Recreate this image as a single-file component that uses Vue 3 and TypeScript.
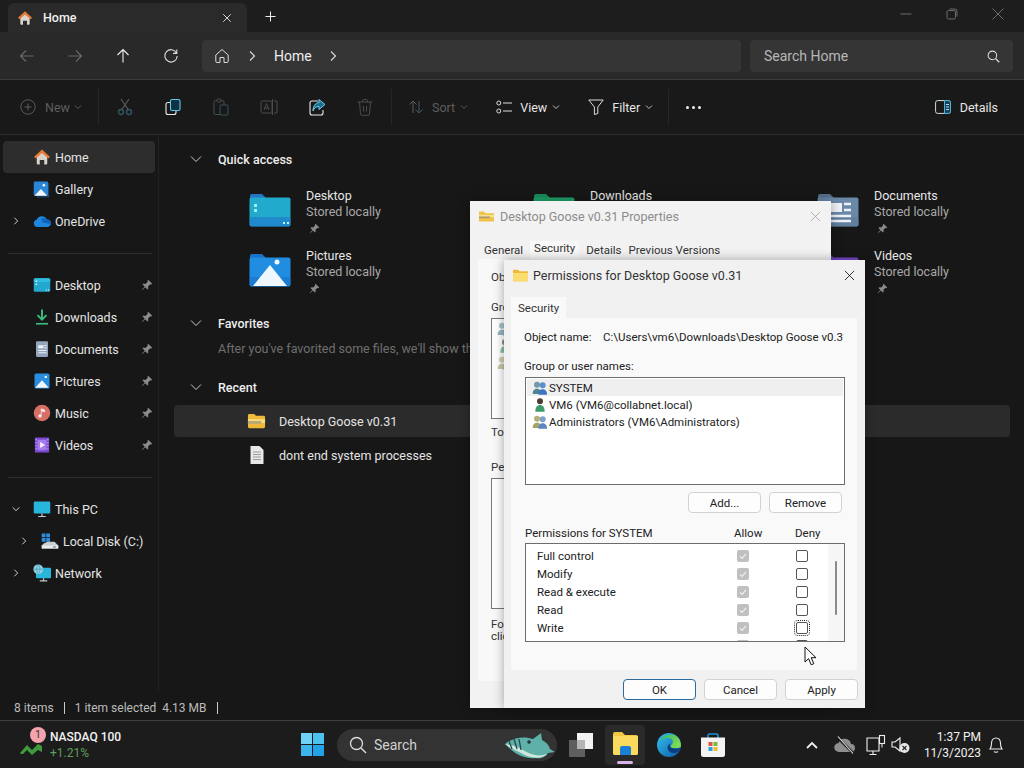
<template>
  <div class="screen">
    <!-- title bar -->
    <div class="titlebar">
      <div class="tab">
        <svg class="ic16" viewBox="0 0 24 24" v-html="icons.home"></svg>
        <span class="tab-label">Home</span>
        <svg class="tab-close" viewBox="0 0 12 12"><path d="M1.5 1.5l9 9M10.5 1.5l-9 9" stroke="#e8e8e8" stroke-width="1.1" /></svg>
      </div>
      <svg class="tab-add" viewBox="0 0 12 12"><path d="M6 .5v11M.5 6h11" stroke="#eee" stroke-width="1.1" /></svg>
      <div class="winctl">
        <div class="winbtn"><svg viewBox="0 0 12 12" width="12" height="12"><path d="M.5 6h11" stroke="#6c6c6c" /></svg></div>
        <div class="winbtn"><svg viewBox="0 0 12 12" width="12" height="12"><rect x="1" y="2.5" width="8.5" height="8.5" rx="1.5" fill="none" stroke="#6c6c6c" /><path d="M3.5 1h5.5a2 2 0 0 1 2 2v5.5" fill="none" stroke="#6c6c6c" /></svg></div>
        <div class="winbtn"><svg viewBox="0 0 12 12" width="12" height="12"><path d="M.5.5l11 11M11.5.5l-11 11" stroke="#6c6c6c" /></svg></div>
      </div>
    </div>

    <!-- navigation bar -->
    <div class="navbar">
      <div class="navbtn"><svg class="ic16" viewBox="0 0 16 16"><path d="M14.5 8h-13M7 2.5 1.5 8 7 13.5" fill="none" stroke="#6a6a6a" stroke-width="1.1" /></svg></div>
      <div class="navbtn"><svg class="ic16" viewBox="0 0 16 16"><path d="M1.5 8h13M9 2.5 14.5 8 9 13.5" fill="none" stroke="#6a6a6a" stroke-width="1.1" /></svg></div>
      <div class="navbtn"><svg class="ic16" viewBox="0 0 16 16"><path d="M8 14.5v-13M2.5 7 8 1.5 13.5 7" fill="none" stroke="#eee" stroke-width="1.1" /></svg></div>
      <div class="navbtn"><svg class="ic16" viewBox="0 0 16 16"><path d="M13.6 5.2A6.2 6.2 0 1 0 14.2 8M13.8 1.6v3.8H10" fill="none" stroke="#ddd" stroke-width="1.1" /></svg></div>
      <div class="address">
        <svg class="addr-home" viewBox="0 0 16 16"><path d="M1.8 7 8 1.5 14.2 7v6.2a1.3 1.3 0 0 1-1.3 1.3H10V9.5H6v5H3.1a1.3 1.3 0 0 1-1.3-1.3z" fill="none" stroke="#ddd" stroke-width="1" /></svg>
        <svg class="crumb c1" viewBox="0 0 8 12"><path d="M2 1.5 6.5 6 2 10.5" fill="none" stroke="#ddd" stroke-width="1.1" /></svg>
        <span class="addr-text">Home</span>
        <svg class="crumb c2" viewBox="0 0 8 12"><path d="M2 1.5 6.5 6 2 10.5" fill="none" stroke="#ddd" stroke-width="1.1" /></svg>
      </div>
      <div class="search">
        <span>Search Home</span>
        <svg class="search-ic" viewBox="0 0 14 14"><circle cx="5.8" cy="5.8" r="4.6" fill="none" stroke="#ddd" stroke-width="1.1" /><path d="M9.2 9.2l4 4" stroke="#ddd" stroke-width="1.3" /></svg>
      </div>
    </div>

    <!-- command bar -->
    <div class="cmdbar">
      <div class="cmd-new dim">
        <svg class="ic16" viewBox="0 0 16 16"><circle cx="8" cy="8" r="7.2" fill="none" stroke="#5c5c5c" /><path d="M8 4.5v7M4.5 8h7" stroke="#5c5c5c" /></svg>
        <span>New</span>
        <svg class="chev" viewBox="0 0 8 6"><path d="M1 1.5 4 4.5 7 1.5" fill="none" stroke="#5c5c5c" /></svg>
      </div>
      <div class="divider"></div>
      <div class="cmd-ic" v-for="c in cmdIcons" :key="c"><svg class="ic18" viewBox="0 0 18 18" v-html="icons[c]"></svg></div>
      <div class="divider d2"></div>
      <div class="cmd-text dim sort">
        <svg class="ic16" viewBox="0 0 16 16"><path d="M5 14V2M1.5 5.5 5 2l3.5 3.5" fill="none" stroke="#5c5c5c" /><path d="M11 2v12M7.5 10.5 11 14l3.5-3.5" fill="none" stroke="#3d5a63" /></svg>
        <span>Sort</span>
        <svg class="chev" viewBox="0 0 8 6"><path d="M1 1.5 4 4.5 7 1.5" fill="none" stroke="#5c5c5c" /></svg>
      </div>
      <div class="cmd-text view">
        <svg class="ic16" viewBox="0 0 16 16"><circle cx="2.8" cy="4" r="2" fill="none" stroke="#ddd" /><circle cx="2.8" cy="12" r="2" fill="none" stroke="#ddd" /><path d="M7 4h9M7 12h9" stroke="#ddd" /></svg>
        <span>View</span>
        <svg class="chev" viewBox="0 0 8 6"><path d="M1 1.5 4 4.5 7 1.5" fill="none" stroke="#bbb" /></svg>
      </div>
      <div class="cmd-text filter">
        <svg class="ic16" viewBox="0 0 16 16"><path d="M.8 1h14.4L9.8 8v6.5l-3.4 1V8z" fill="none" stroke="#ddd" /></svg>
        <span>Filter</span>
        <svg class="chev" viewBox="0 0 8 6"><path d="M1 1.5 4 4.5 7 1.5" fill="none" stroke="#bbb" /></svg>
      </div>
      <div class="divider d3"></div>
      <div class="more"><i></i><i></i><i></i></div>
      <div class="details">
        <svg class="ic16" viewBox="0 0 16 16"><rect x=".6" y="1.6" width="14.8" height="12.8" rx="2" fill="none" stroke="#cfdde2" /><path d="M9.5 1.6h4a2 2 0 0 1 2 2v8.8a2 2 0 0 1-2 2h-4z" fill="#17435a" stroke="#4fb3dc" /><path d="M11 5.5h3M11 8h3M11 10.5h3" stroke="#cfe9f5" stroke-width=".9" /></svg>
        <span>Details</span>
      </div>
    </div>

    <!-- body -->
    <div class="body">
      <aside class="sidebar">
        <template v-for="(group, gi) in sidebar" :key="gi">
          <div v-if="gi" class="side-sep"></div>
          <div
            v-for="item in group"
            :key="item.label"
            class="side-row"
            :class="{ active: item.active, indent: item.indent }"
          >
            <svg v-if="item.expander" class="side-chev" viewBox="0 0 12 12">
              <path :d="item.expander === 'open' ? 'M2 4l4 4 4-4' : 'M4 2l4 4-4 4'" fill="none" stroke="#ccc" stroke-width="1.2" />
            </svg>
            <span v-else class="side-chev"></span>
            <svg class="side-ic" viewBox="0 0 24 24" v-html="icons[item.icon]"></svg>
            <span class="side-label">{{ item.label }}</span>
            <svg v-if="item.pinned" class="side-pin" viewBox="0 0 12 12" v-html="icons.pin"></svg>
          </div>
        </template>
      </aside>

      <main class="content">
        <div class="sec-head">
          <svg class="sec-chev" viewBox="0 0 12 12"><path d="M1 3.5 6 8.5l5-5" fill="none" stroke="#ccc" /></svg>
          <span>Quick access</span>
        </div>
        <div class="qa-grid">
          <div class="qa-item" v-for="q in quick" :key="q.name">
            <svg class="qa-ic" viewBox="0 0 42 34" v-html="icons[q.icon]"></svg>
            <div class="qa-text">
              <div class="qa-name">{{ q.name }}</div>
              <div class="qa-sub">Stored locally</div>
              <svg class="qa-pin" viewBox="0 0 12 12" v-html="icons.pin"></svg>
            </div>
          </div>
        </div>

        <div class="sec-head fav">
          <svg class="sec-chev" viewBox="0 0 12 12"><path d="M1 3.5 6 8.5l5-5" fill="none" stroke="#ccc" /></svg>
          <span>Favorites</span>
        </div>
        <div class="fav-desc">After you've favorited some files, we'll show them here.</div>

        <div class="sec-head rec">
          <svg class="sec-chev" viewBox="0 0 12 12"><path d="M1 3.5 6 8.5l5-5" fill="none" stroke="#ccc" /></svg>
          <span>Recent</span>
        </div>
        <div class="rec-row sel">
          <svg class="rec-ic" viewBox="0 0 20 18"><path d="M1 3a1.5 1.5 0 0 1 1.5-1.5h5L9.500 3.500H17.500A1.500 1.500 0 0 1 19 5v10a1.500 1.500 0 0 1-1.500 1.500h-15A1.500 1.500 0 0 1 1 15z" fill="#f0b93a" /><path d="M1 7h18v4H1z" fill="#f9dc7c" /><path d="M1 9h14v3H1z" fill="#b9a878" /></svg>
          <span>Desktop Goose v0.31</span>
        </div>
        <div class="rec-row">
          <svg class="rec-ic doc" viewBox="0 0 16 20"><path d="M1.500 1h9l4 4v14h-13z" fill="#e8e8e8" /><path d="M4 7h8M4 9.500h8M4 12h8M4 14.500h8" stroke="#8a8a8a" stroke-width=".8" /></svg>
          <span>dont end system processes</span>
        </div>
      </main>
    </div>

    <div class="status">
      <span>8 items</span><i></i><span>1 item selected&nbsp; 4.13 MB</span><i></i>
    </div>

    <!-- taskbar -->
    <div class="taskbar">
      <div class="widget">
        <div class="w-ic">
          <svg width="24" height="16" viewBox="0 0 24 16"><path d="M0 14 7 6l5 5 6-6 4 2v6l-4-2-6 5-5-5-4 4H1z" fill="#3f9a3d" /></svg>
          <span class="badge">1</span>
        </div>
        <div class="w-text">
          <div class="w-name">NASDAQ 100</div>
          <div class="w-val">+1.21%</div>
        </div>
      </div>
      <svg class="tb-win" viewBox="0 0 23 23">
        <rect width="11" height="11" fill="#6fd3f7" /><rect x="12" width="11" height="11" fill="#4cc2f1" />
        <rect y="12" width="11" height="11" fill="#3db4ee" /><rect x="12" y="12" width="11" height="11" fill="#22a3e8" />
      </svg>
      <div class="tb-search">
        <svg width="18" height="18" viewBox="0 0 18 18"><circle cx="7.500" cy="7.500" r="6" fill="none" stroke="#ddd" stroke-width="1.3" /><path d="M12 12l5 5" stroke="#ddd" stroke-width="1.4" /></svg>
        <span>Search</span>
        <svg class="goose" viewBox="0 0 50 30">
          <path d="M0 14C8 7 20 6 28 9l8-6 1 7c4 2 7 5 8 9l5 3-7 1c-2 4-7 6-12 5-10 1-20-2-31-14z" fill="#5fb0a8" />
          <path d="M0 14c6 1 12 2 18 6 8 5 16 7 24 4-6 6-18 4-26-1C10 20 5 18 0 14z" fill="#cfe6dc" />
          <path d="M4 11l3 8M9 9l3 10M14 9l2 11" stroke="#26484c" stroke-width="1.300" />
          <circle cx="24" cy="12" r="1.800" fill="#20383b" />
        </svg>
      </div>
      <svg class="tb-task" viewBox="0 0 24 24">
        <rect y="7" width="16" height="17" fill="#5e5e5e" /><rect x="8" width="16" height="16" fill="#f2f2f2" /><rect x="8" y="7" width="8" height="9" fill="#b5b5b5" />
      </svg>
      <div class="tb-exp">
        <svg width="25" height="23" viewBox="0 0 25 23">
          <path d="M0 2a2 2 0 0 1 2-2h7l3 3h11a2 2 0 0 1 2 2v16a2 2 0 0 1-2 2H2a2 2 0 0 1-2-2z" fill="#f5c93f" />
          <path d="M0 4h25v17a2 2 0 0 1-2 2H2a2 2 0 0 1-2-2z" fill="#fbdb5e" />
          <path d="M7 16a2 2 0 0 1 2-2h7a2 2 0 0 1 2 2v7H7z" fill="#1a7fd6" />
        </svg>
        <span class="tb-pill"></span>
      </div>
      <svg class="tb-edge" viewBox="0 0 24 24">
        <defs>
          <linearGradient id="edgeA" x1="0" y1="0" x2="1" y2="1"><stop offset="0" stop-color="#35c1f1" /><stop offset="1" stop-color="#0c59a4" /></linearGradient>
          <linearGradient id="edgeB" x1="0" y1="0" x2="1" y2="0.500"><stop offset="0" stop-color="#2fb36e" /><stop offset="1" stop-color="#7fdc4e" /></linearGradient>
        </defs>
        <circle cx="12" cy="12" r="12" fill="url(#edgeA)" />
        <path d="M3 8C6 2 14 0 19 3c4 2.500 5 7 5 10 0 1.500-2 2-6 2h-5c1-3 3-4.500 3-6.500C16 6 13 4.500 10 5 7 5.500 4 7 3 8z" fill="url(#edgeB)" />
        <path d="M24 15c-1 3-4 5-7 5-3.500 0-6.500-2-6.500-5.500 0-2 1.500-3.500 3-4-1 1-1 2.500 0 3.500 2 2 7 2 10.500 1z" fill="#0b3f80" />
      </svg>
      <svg class="tb-store" viewBox="0 0 24 24">
        <path d="M7 5V2.500A1.500 1.500 0 0 1 8.500 1h7A1.500 1.500 0 0 1 17 2.500V5" fill="none" stroke="#1d8fd6" stroke-width="1.600" />
        <path d="M0 4.500h24v17a2.500 2.500 0 0 1-2.500 2.500h-19A2.500 2.500 0 0 1 0 21.500z" fill="#f3f3f3" />
        <rect x="7.500" y="9" width="4" height="4" fill="#e2553a" /><rect x="12.500" y="9" width="4" height="4" fill="#78b83b" />
        <rect x="7.500" y="14" width="4" height="4" fill="#2aa4e0" /><rect x="12.500" y="14" width="4" height="4" fill="#f1bc2e" />
      </svg>
      <div class="tray">
        <svg class="tray-ic" viewBox="0 0 24 24"><path d="M7 15l5-5 5 5" fill="none" stroke="#eee" stroke-width="1.800" /></svg>
        <svg class="tray-ic t2" viewBox="0 0 24 24"><path d="M6 19a4.500 4.500 0 0 1-.5-9 6.500 6.500 0 0 1 12.500 1 4 4 0 0 1 0 8z" fill="#8e8e8e" /><path d="M4 4l16 16" stroke="#1c1c1c" stroke-width="2.500" /><path d="M5 3.500 20 20.500" stroke="#e2e2e2" stroke-width="1.100" /></svg>
        <svg class="tray-ic t3" viewBox="0 0 24 24"><path d="M3 5h12v13H3zM9 18v3M5.500 21.500h7" fill="none" stroke="#eee" stroke-width="1.100" /><rect x="15.500" y="2.500" width="5" height="8" fill="#1c1c1c" stroke="#eee" stroke-width="1.100" /><path d="M18 10.500v4" stroke="#eee" /></svg>
        <svg class="tray-ic t4" viewBox="0 0 24 24"><path d="M3 9h3l5-4v13l-5-4H3z" fill="none" stroke="#eee" stroke-width="1.100" /><circle cx="15.500" cy="15" r="5" fill="#e8e8e8" /><path d="M13.500 13l4 4M17.500 13l-4 4" stroke="#222" stroke-width="1.100" /></svg>
        <div class="clock"><div>1:37 PM</div><div>11/3/2023</div></div>
        <svg class="bell" viewBox="0 0 16 18"><path d="M2 13c1-1.500 1.500-2.500 1.500-5.500C3.500 4 5.500 2 8 2s4.500 2 4.500 5.500c0 3 .5 4 1.500 5.500zM6 15.500c.5 1 3.500 1 4 0" fill="none" stroke="#eee" stroke-width="1.100" /></svg>
      </div>
    </div>

    <!-- properties dialog, behind -->
    <div class="dlg back">
      <div class="dlg-title">
        <svg class="dlg-ic" viewBox="0 0 20 18"><path d="M1 3h6l2 2h10v10H1z" fill="#f0c24a" /><path d="M1 7h18v3H1z" fill="#f9e08a" /><path d="M1 9h13v2H1z" fill="#a89a70" /></svg>
        <span class="back-name">Desktop Goose v0.31 Properties</span>
        <svg class="dlg-x" viewBox="0 0 12 12"><path d="M1 1l10 10M11 1 1 11" stroke="#a8a8a8" /></svg>
      </div>
      <div class="back-tabs">
        <span>General</span><span class="cur">Security</span><span>Details</span><span>Previous Versions</span>
      </div>
      <div class="back-panel">
        <div class="b-line">Ob</div>
        <div class="b-line g1">Gro</div>
        <div class="b-box bb1">
          <svg viewBox="0 0 24 24" class="b-user" v-html="icons.group"></svg>
          <svg viewBox="0 0 24 24" class="b-user" v-html="icons.user"></svg>
          <svg viewBox="0 0 24 24" class="b-user" v-html="icons.group2"></svg>
        </div>
        <div class="b-line g2">To</div>
        <div class="b-line g3">Pe</div>
        <div class="b-box bb2"></div>
        <div class="b-line g4">For<br />clic</div>
      </div>
    </div>

    <!-- permissions dialog, front -->
    <div class="dlg front">
      <div class="dlg-title">
        <svg class="dlg-ic" viewBox="0 0 20 18"><path d="M1 3a1 1 0 0 1 1-1h5l2 2h9a1 1 0 0 1 1 1v11H1z" fill="#eeb93a" /><path d="M1 6h18v10H1z" fill="#fbdc6f" /></svg>
        <span class="front-name">Permissions for Desktop Goose v0.31</span>
        <svg class="dlg-x" viewBox="0 0 12 12"><path d="M1 1l10 10M11 1 1 11" stroke="#222" /></svg>
      </div>
      <div class="front-tabs"><span>Security</span></div>
      <div class="panel">
        <div class="obj-row"><span class="obj-k">Object name:</span><span class="obj-v">C:\Users\vm6\Downloads\Desktop Goose v0.31.z</span></div>
        <div class="lbl grp">Group or user names:</div>
        <div class="userbox">
          <div class="user-row" v-for="u in users" :key="u.name" :class="{ sel: u.sel }">
            <svg class="user-ic" viewBox="0 0 24 24" v-html="icons[u.icon]"></svg>
            <span>{{ u.name }}</span>
          </div>
        </div>
        <div class="btn-row">
          <button class="btn">Add...</button>
          <button class="btn">Remove</button>
        </div>
        <div class="perm-head">
          <span class="ph-name">Permissions for SYSTEM</span>
          <span class="ph-allow">Allow</span>
          <span>Deny</span>
        </div>
        <div class="permbox">
          <div class="perm-rows">
            <div class="perm-row" v-for="(p, i) in perms" :key="p">
              <span class="perm-name">{{ p }}</span>
              <span class="chk on">
                <svg viewBox="0 0 12 12" width="12" height="12"><path d="M3 6.500 5 8.500 9 4" fill="none" stroke="#eee" stroke-width="1.200" /></svg>
              </span>
              <span class="chk" :class="{ focus: i === 4 }"></span>
            </div>
          </div>
          <div class="scroll"><div class="thumb"></div></div>
        </div>
      </div>
      <div class="foot">
        <button class="btn ok">OK</button>
        <button class="btn">Cancel</button>
        <button class="btn">Apply</button>
      </div>
      <svg class="cursor" width="14" height="21" viewBox="0 0 14 21">
        <path d="M1 1v15l3.600-3.400 2.600 6.200 2.600-1.100-2.600-6H12z" fill="#fff" stroke="#111" stroke-width="1" />
      </svg>
    </div>
  </div>
</template>

<script setup lang="ts">
type SideItem = {
  label: string
  icon: string
  active?: boolean
  indent?: boolean
  pinned?: boolean
  expander?: 'open' | 'closed'
}

const icons: Record<string, string> = {
  home: '<path d="M5 12v8.500A1.500 1.500 0 0 0 6.500 22H9v-6h6v6h2.500a1.500 1.500 0 0 0 1.500-1.500V12L12 6z" fill="#d9d3cd"/><path d="M12 2 1.500 11.500 3.500 14 12 6.500 20.500 14l2-2.500z" fill="#e87c34"/>',
  gallery: '<rect x="1" y="2" width="19" height="19" rx="1.500" fill="#2c86d8"/><path d="M2 21l8.500-9 8.500 9z" fill="#f4f8fc"/><circle cx="14.500" cy="7" r="1.800" fill="#f4f8fc"/><path d="M21.500 4v19H5v-1h15.500V4z" fill="#1c5f9c"/>',
  onedrive: '<path d="M6 20a5 5 0 0 1-1.200-9.800A7.500 7.500 0 0 1 18.600 10a5 5 0 0 1 .4 10z" fill="#1f86de"/><path d="M11 9a7.500 7.500 0 0 1 7.600 1A5 5 0 0 1 23.800 16L13 14z" fill="#0f63b8"/>',
  desktop: '<rect x="1" y="3" width="22" height="18" rx="2" fill="#23a7cf"/><rect x="1" y="3" width="22" height="5" rx="2" fill="#2fbce0"/><rect x="3.500" y="6" width="2" height="2" fill="#d6f6ff"/><rect x="3.500" y="10" width="2" height="2" fill="#d6f6ff"/><rect x="17" y="18" width="1.500" height="1.500" fill="#d6f6ff"/><rect x="20" y="18" width="1.500" height="1.500" fill="#d6f6ff"/>',
  downloads: '<path d="M12 2v12M6 9.500l6 6 6-6" fill="none" stroke="#3cbd7c" stroke-width="2.600"/><path d="M4 21h16" stroke="#3cbd7c" stroke-width="2.200"/>',
  documents: '<rect x="4" y="1.500" width="16" height="21" rx="1.500" fill="#94a5bd"/><path d="M7 7h7v4H7z" fill="#edf1f6"/><path d="M15 7.500h3M15 10.500h3M7 14h11M7 17h11" stroke="#edf1f6" stroke-width="1.300"/>',
  pictures: '<rect x="2" y="2" width="20" height="20" rx="2" fill="#2a8ddf"/><path d="M3 21l9-10 9 10z" fill="#f3f8fc"/><circle cx="17" cy="6.500" r="1.600" fill="#f3f8fc"/>',
  music: '<circle cx="12" cy="12" r="11" fill="#d76f66"/><path d="M11 6.500v9M11 6.500l4.500 1.500v2.500L11 9" fill="#fbeeed" stroke="#fbeeed"/><circle cx="9.300" cy="16" r="2.200" fill="#fbeeed"/>',
  videos: '<rect x="2.500" y="2" width="19" height="20" rx="1" fill="#7c4ad4"/><rect x="6" y="5" width="12" height="14" fill="#a47cec"/><path d="M9.500 8v8l6.500-4z" fill="#f5eeff"/><path d="M3.500 5h1.500M3.500 9h1.500M3.500 13h1.500M3.500 17h1.500M19 5h1.500M19 9h1.500M19 13h1.500M19 17h1.500" stroke="#d8c6fa" stroke-width="1.400"/>',
  pc: '<rect x="1" y="2" width="22" height="16" rx="1.500" fill="#28b5dc"/><path d="M12 18v3.500M7 22h10" stroke="#c5ccd0" stroke-width="1.600"/>',
  disk: '<rect x="1" y="2" width="5" height="5" fill="#2d8ee0"/><rect x="7" y="2" width="5" height="5" fill="#2d8ee0"/><rect x="1" y="8" width="5" height="5" fill="#2d8ee0"/><rect x="7" y="8" width="5" height="5" fill="#2d8ee0"/><path d="M9 13h9l5 5v4H1v-4l3-3z" fill="#c9ced2"/><rect x="1" y="18" width="22" height="4" fill="#e8ebed"/><path d="M16 20h4" stroke="#444"/>',
  network: '<rect x="4" y="5" width="20" height="14" rx="1.500" fill="#28b5dc"/><path d="M14 19v3M9 22.500h10" stroke="#c5ccd0" stroke-width="1.600"/><circle cx="7" cy="7" r="6.500" fill="#8fd2e4"/><path d="M1 7h12M7 1c-3 3-3 9 0 12M7 1c3 3 3 9 0 12" stroke="#3c8fa8" fill="none" stroke-width=".8"/>',
  pin: '<path d="M7.200.8 11.200 4.800 10.300 5.600 9.500 5.200 7 7.400 7.300 9.600 6.400 10.400 4.300 8.200 1.300 11 1 10.700 3.700 7.600 1.600 5.500 2.400 4.600 4.600 5 6.800 2.500 6.400 1.700z" fill="#8b8b8b"/>',
  cut: '<path d="M5 1l7.500 11M13 1 5.500 12" stroke="#5e5e5e" stroke-width="1.100" fill="none"/><circle cx="5" cy="14" r="2.500" fill="none" stroke="#2f5a66" stroke-width="1.300"/><circle cx="13" cy="14" r="2.500" fill="none" stroke="#2f5a66" stroke-width="1.300"/>',
  copy: '<rect x="6.500" y="1.500" width="9.500" height="11" rx="1.500" fill="#0e3242" stroke="#5cc8ec" stroke-width="1.100"/><path d="M6 4.500H4A2 2 0 0 0 2 6.500v8A2 2 0 0 0 4 16.500h6a2 2 0 0 0 2-2V13" fill="none" stroke="#eaeaea" stroke-width="1.100"/>',
  paste: '<rect x="2" y="2.500" width="10" height="14" rx="1.500" fill="none" stroke="#4c4c4c"/><rect x="5" y="1" width="4" height="3" rx="1" fill="#191919" stroke="#4c4c4c"/><rect x="8" y="7" width="8" height="10" rx="1" fill="#191919" stroke="#35525c"/>',
  rename: '<rect x="1" y="3" width="11" height="12" rx="1.500" fill="none" stroke="#4c4c4c"/><path d="M4 12l2.500-6.500L9 12M4.800 10h3.400" fill="none" stroke="#4c4c4c"/><path d="M12.500 1v16M14 3h3v12h-3" fill="none" stroke="#4c4c4c"/>',
  share: '<path d="M10 3H4a2 2 0 0 0-2 2v10a2 2 0 0 0 2 2h9a2 2 0 0 0 2-2v-3" fill="none" stroke="#eaeaea" stroke-width="1.100"/><path d="M11 1.500l6 5-6 5V8.500C8 8.500 6 10 5 13c0-4.500 2-8 6-8.500z" fill="#1d6f92" stroke="#6fd0f2" stroke-width="1"/>',
  trash: '<path d="M1.500 4h15M6.500 4V2.500a1 1 0 0 1 1-1h3a1 1 0 0 1 1 1V4M3.500 4l1 12a1.500 1.500 0 0 0 1.500 1.300h6a1.500 1.500 0 0 0 1.500-1.300l1-12M7.500 8v5.500M10.500 8v5.500" fill="none" stroke="#4c4c4c"/>',
  group: '<circle cx="7.500" cy="7" r="4.500" fill="#6f9aa8"/><path d="M1 21c0-6 3-8 6.500-8s6.500 2 6.500 8z" fill="#4f8494"/><circle cx="16" cy="8" r="4.500" fill="#5c8fd0"/><path d="M9.500 22c0-6 3-8 6.500-8s6.500 2 6.500 8z" fill="#3d74c4"/>',
  group2: '<circle cx="7.500" cy="7" r="4.500" fill="#b5b07a"/><path d="M1 21c0-6 3-8 6.500-8s6.500 2 6.500 8z" fill="#a2a465"/><circle cx="16" cy="8" r="4.500" fill="#7f9ec8"/><path d="M9.500 22c0-6 3-8 6.500-8s6.500 2 6.500 8z" fill="#5d86c0"/>',
  user: '<circle cx="12" cy="6.500" r="4.500" fill="#4b3c30"/><path d="M5 22c0-7 3-10 7-10s7 3 7 10z" fill="#3e9a66"/>'
}

const cmdIcons = ['cut', 'copy', 'paste', 'rename', 'share', 'trash']

const sidebar: SideItem[][] = [
  [
    { label: 'Home', icon: 'home', active: true },
    { label: 'Gallery', icon: 'gallery' },
    { label: 'OneDrive', icon: 'onedrive', expander: 'closed' }
  ],
  [
    { label: 'Desktop', icon: 'desktop', pinned: true },
    { label: 'Downloads', icon: 'downloads', pinned: true },
    { label: 'Documents', icon: 'documents', pinned: true },
    { label: 'Pictures', icon: 'pictures', pinned: true },
    { label: 'Music', icon: 'music', pinned: true },
    { label: 'Videos', icon: 'videos', pinned: true }
  ],
  [
    { label: 'This PC', icon: 'pc', expander: 'open' },
    { label: 'Local Disk (C:)', icon: 'disk', expander: 'closed', indent: true },
    { label: 'Network', icon: 'network', expander: 'closed' }
  ]
]

const folder = (body: string, a: string, b: string, tab: string) =>
  `<path d="M1 3a2 2 0 0 1 2-2h10l5 5v6H1z" fill="${tab}"/><rect x="0.500" y="4.500" width="41" height="29" rx="2" fill="${a}"/><rect x="0.500" y="24" width="41" height="9.500" rx="2" fill="${b}" opacity=".55"/>${body}`

icons.fDesktop = folder('<rect x="5" y="11" width="3" height="3" fill="#9cf0f4"/><rect x="5" y="16" width="3" height="3" fill="#9cf0f4"/><rect x="34" y="29" width="2" height="2" fill="#bdf2f8"/><rect x="38" y="29" width="2" height="2" fill="#bdf2f8"/>', '#22aacd', '#1f6fce', '#2375c6')
icons.fDownloads = folder('', '#20a26a', '#137a4e', '#188a58')
icons.fDocuments = folder('<path d="M14 10h11v9H14z" fill="#eef2f6"/><path d="M27 11h7M27 17h7M14 23h20M14 28h20" stroke="#eef2f6" stroke-width="2.400"/>', '#6a88a8', '#5a7898', '#566f8c')
icons.fPictures = folder('<path d="M4 33 21 12l17 21z" fill="#eef7fd"/><circle cx="28" cy="9" r="2.500" fill="#eef7fd"/>', '#208de0', '#1670c6', '#1a72c8')
icons.fVideos = folder('<path d="M17 12v14l12-7z" fill="#f3e9ff"/>', '#7b4ad0', '#6138b0', '#6a3cc0')

const quick = [
  { name: 'Desktop', icon: 'fDesktop' },
  { name: 'Downloads', icon: 'fDownloads' },
  { name: 'Documents', icon: 'fDocuments' },
  { name: 'Pictures', icon: 'fPictures' },
  { name: 'Music', icon: 'fVideos' },
  { name: 'Videos', icon: 'fVideos' }
]

const users = [
  { name: 'SYSTEM', icon: 'group', sel: true },
  { name: 'VM6 (VM6@collabnet.local)', icon: 'user', sel: false },
  { name: 'Administrators (VM6\\Administrators)', icon: 'group2', sel: false }
]

const perms = ['Full control', 'Modify', 'Read & execute', 'Read', 'Write', '']
</script>

<style>
html, body {
  margin: 0;
  background: #191919;
}
</style>

<style scoped>
.screen {
  position: relative;
  width: 1024px;
  height: 768px;
  overflow: hidden;
  display: flex;
  flex-direction: column;
  background: #171717;
  color: #e6e6e6;
  font-family: Roboto, "Open Sans", sans-serif;
  font-size: 12.5px;
}

svg { display: block; flex-shrink: 0; }
.ic16 { width: 16px; height: 16px; }
.ic18 { width: 18px; height: 18px; }

/* title bar */
.titlebar {
  height: 32px;
  flex-shrink: 0;
  display: flex;
  align-items: flex-end;
  padding-left: 8px;
  background: #1d1d1d;
}
.tab {
  width: 239px;
  height: 29px;
  box-sizing: border-box;
  padding: 0 15px 0 9px;
  display: flex;
  align-items: center;
  border-radius: 6px 6px 0 0;
  background: #2a2a2a;
}
.tab-label { margin-left: 10px; font-weight: 500; color: #f0f0f0; }
.tab-close { width: 10px; height: 10px; margin-left: auto; }
.tab-add { width: 11px; height: 11px; margin: 0 0 10px 18px; }
.winctl {
  margin-left: auto;
  padding-right: 3px;
  align-self: stretch;
  display: flex;
}
.winbtn {
  width: 46px;
  display: flex;
  align-items: center;
  justify-content: center;
  padding-bottom: 4px;
}

/* nav bar */
.navbar {
  height: 48px;
  flex-shrink: 0;
  box-sizing: border-box;
  padding: 8px 11px 7px 3px;
  display: flex;
  align-items: stretch;
  background: #292929;
  border-bottom: 1px solid #3a3a3a;
}
.navbtn {
  width: 48px;
  display: flex;
  align-items: center;
  justify-content: center;
}
.address {
  width: 539px;
  margin-left: 7px;
  display: flex;
  align-items: center;
  border-radius: 4px;
  background: #353535;
}
.addr-home { width: 16px; height: 16px; margin-left: 12px; }
.crumb { width: 8px; height: 12px; }
.crumb.c1 { margin-left: 18px; }
.addr-text { margin-left: 18px; font-size: 14px; color: #eee; }
.crumb.c2 { margin-left: 17px; }
.search {
  flex: 1;
  margin-left: 9px;
  padding: 0 13px 0 14px;
  display: flex;
  align-items: center;
  justify-content: space-between;
  border-radius: 4px;
  background: #353535;
  color: #b8b8b8;
  font-size: 14px;
}
.search-ic { width: 13px; height: 13px; }

/* command bar */
.cmdbar {
  height: 55px;
  flex-shrink: 0;
  box-sizing: border-box;
  display: flex;
  align-items: center;
  background: #191919;
  border-bottom: 1px solid #2e2e2e;
}
.dim { color: #5e5e5e; }
.chev { width: 8px; height: 6px; }
.cmd-new {
  width: 98px;
  box-sizing: border-box;
  padding-left: 20px;
  display: flex;
  align-items: center;
}
.cmd-new span { margin-left: 9px; }
.cmd-new .chev { margin-left: 4px; }
.divider { width: 1px; height: 36px; background: #262626; }
.divider.d2 { margin: 0 0 0 2px; }
.divider.d3 { margin-left: 15px; }
.cmd-ic {
  width: 48px;
  display: flex;
  justify-content: center;
}
.cmd-new + .divider { margin-right: 2px; }
.cmd-text {
  display: flex;
  align-items: center;
}
.cmd-text span { margin-left: 8px; }
.cmd-text .chev { margin-left: 5px; }
.sort { margin-left: 16px; }
.view { margin-left: 28px; }
.filter { margin-left: 28px; }
.more {
  margin-left: 17px;
  display: flex;
  gap: 3px;
}
.more i { width: 3px; height: 3px; border-radius: 50%; background: #eee; }
.details {
  margin-left: auto;
  margin-right: 26px;
  display: flex;
  align-items: center;
  gap: 9px;
}

/* body */
.body {
  flex: 1;
  min-height: 0;
  display: flex;
}
.sidebar {
  width: 159px;
  flex-shrink: 0;
  box-sizing: border-box;
  padding: 6px 3px 0;
  border-right: 1px solid #222;
}
.side-row {
  height: 32px;
  display: flex;
  align-items: center;
  border-radius: 4px;
  color: #e4e4e4;
}
.side-row.active { background: #2d2d2d; }
.side-row.indent { padding-left: 8px; }
.side-chev { width: 10px; height: 10px; margin-left: 8px; }
.side-ic { width: 18px; height: 18px; margin-left: 12px; }
.side-label { margin-left: 4px; white-space: nowrap; }
.side-pin { width: 12px; height: 12px; margin-left: auto; margin-right: 2px; }
.side-sep { height: 1px; margin: 16px 3px 15px 5px; background: #2e2e2e; }

.content {
  flex: 1;
  min-width: 0;
  padding-top: 12px;
}
.sec-head {
  height: 24px;
  display: flex;
  align-items: center;
  padding-left: 31px;
  font-weight: 500;
  color: #eee;
}
.sec-chev { width: 12px; height: 12px; margin-right: 16px; }
.sec-head.fav { margin-top: 3px; }
.sec-head.rec { margin-top: 18px; }
.qa-grid {
  margin-top: 17px;
  padding-left: 90px;
  display: grid;
  grid-template-columns: repeat(3, 284px);
  grid-auto-rows: 60px;
}
.qa-item { display: flex; }
.qa-ic { width: 42px; height: 34px; margin-top: 5px; }
.qa-text { margin-left: 15px; line-height: 16px; }
.qa-name { color: #e6e6e6; }
.qa-sub { color: #a8a8a8; white-space: nowrap; }
.qa-pin { width: 11px; height: 11px; margin: 3px 0 0 3px; }
.fav-desc {
  margin: 6px 0 0 59px;
  line-height: 16px;
  color: #6f6f6f;
  white-space: nowrap;
}
.rec-row {
  height: 32px;
  margin: 2px 14px 0 15px;
  padding-left: 73px;
  display: flex;
  align-items: center;
  border-radius: 4px;
  color: #e4e4e4;
}
.rec-row.sel { margin-top: 6px; background: #2b2b2b; }
.rec-ic { width: 19px; height: 18px; margin-right: 13px; }
.rec-ic.doc { width: 16px; height: 20px; margin: 0 14px 0 2px; }

/* status bar */
.status {
  height: 30px;
  flex-shrink: 0;
  padding: 6px 0 0 14px;
  box-sizing: border-box;
  display: flex;
  align-items: center;
  color: #bcbcbc;
  font-size: 12px;
}
.status i { width: 1px; height: 12px; margin: 0 10px; background: #ccc; }

/* taskbar */
.taskbar {
  height: 48px;
  flex-shrink: 0;
  display: flex;
  align-items: center;
  background: #1c1c1c;
  border-top: 1px solid #3e3e3e;
  box-sizing: border-box;
}
.widget {
  width: 301px;
  box-sizing: border-box;
  padding-left: 20px;
  display: flex;
  align-items: center;
}
.w-ic { position: relative; width: 30px; height: 16px; margin-top: 4px; }
.badge {
  position: absolute;
  left: 10px;
  top: -12px;
  width: 16px;
  height: 16px;
  border-radius: 50%;
  background: #f4a3ad;
  color: #333;
  font-size: 10.5px;
  line-height: 16px;
  text-align: center;
}
.w-text { line-height: 16px; font-size: 12px; }
.w-name { color: #f2f2f2; font-weight: 500; }
.w-val { color: #5f9e5a; }
.tb-win { width: 23px; height: 23px; }
.tb-search {
  width: 220px;
  height: 32px;
  margin-left: 13px;
  padding: 0 2px 0 12px;
  box-sizing: border-box;
  display: flex;
  align-items: center;
  border-radius: 16px;
  background: #333;
  color: #d0d0d0;
  font-size: 14px;
}
.tb-search span { margin-left: 7px; }
.goose { width: 50px; height: 30px; margin-left: auto; }
.tb-task { width: 24px; height: 24px; margin-left: 12px; }
.tb-exp {
  position: relative;
  width: 40px;
  height: 40px;
  margin-left: 12px;
  display: flex;
  align-items: center;
  justify-content: center;
  padding-bottom: 2px;
  box-sizing: border-box;
  border-radius: 4px;
  background: #2a2a2a;
}
.tb-pill {
  position: absolute;
  left: 12px;
  bottom: 1px;
  width: 16px;
  height: 3px;
  border-radius: 2px;
  background: #d7b4e6;
}
.tb-edge { width: 24px; height: 24px; margin-left: 12px; }
.tb-store { width: 24px; height: 24px; margin-left: 20px; }
.tray {
  margin-left: auto;
  padding-right: 20px;
  display: flex;
  align-items: center;
}
.tray-ic { width: 24px; height: 24px; }
.t2 { margin-left: 9px; }
.t3 { margin-left: 7px; }
.t4 { margin-left: 1px; }
.clock {
  width: 68px;
  text-align: right;
  line-height: 16px;
  font-size: 12px;
  color: #f0f0f0;
}
.bell { width: 16px; height: 18px; margin-left: 7px; }

/* dialogs */
.dlg {
  position: absolute;
  box-sizing: border-box;
  color: #222;
  font-size: 11.5px;
  box-shadow: 0 0 10px rgba(0, 0, 0, 0.35);
}
.dlg-title {
  height: 30px;
  display: flex;
  align-items: center;
  font-size: 12.5px;
}
.dlg-ic { width: 17px; height: 15px; }
.dlg-x { width: 11px; height: 11px; margin-left: auto; }

.back {
  left: 470px;
  top: 201px;
  width: 361px;
  height: 507px;
  background: #f2f2f2;
}
.back .dlg-title { padding: 0 10px 0 8px; }
.back-name { margin-left: 5px; color: #8c8c8c; }
.back-tabs {
  height: 28px;
  padding-left: 14px;
  display: flex;
  align-items: flex-end;
  gap: 7px;
  color: #333;
}
.back-tabs span { padding-bottom: 2px; }
.back-tabs .cur { padding: 0 4px 4px; background: #f8f8f8; }
.back-panel {
  height: 411px;
  margin-left: 8px;
  padding: 11px 0 0 13px;
  background: #f8f8f8;
  color: #333;
  overflow: hidden;
  white-space: nowrap;
}
.b-line { line-height: 15px; }
.b-line.g1 { margin-top: 15px; }
.b-box { width: 320px; border: 1px solid #777; box-sizing: border-box; background: #fff; }
.bb1 { height: 101px; margin-top: 3px; padding: 2px 0 0 5px; }
.b-user { width: 16px; height: 16px; opacity: 0.6; margin-bottom: 1px; }
.b-line.g2 { margin-top: 6px; }
.b-line.g3 { margin-top: 20px; }
.bb2 { height: 131px; margin-top: 3px; }
.b-line.g4 { margin-top: 9px; line-height: 12px; }

.front {
  left: 504px;
  top: 260px;
  width: 361px;
  height: 448px;
  background: #f1f1f1;
}
.front .dlg-title { padding: 0 10px 0 8px; }
.front-name { margin-left: 4px; color: #333; }
.front-tabs {
  height: 28px;
  padding-left: 7px;
  display: flex;
  align-items: flex-end;
}
.front-tabs span {
  height: 21px;
  padding: 0 7px;
  display: flex;
  align-items: center;
  background: #f9f9f9;
  color: #333;
}
.panel {
  height: 352px;
  margin: 0 8px 0 7px;
  padding: 0 0 0 13px;
  box-sizing: border-box;
  background: #f9f9f9;
  overflow: hidden;
}
.obj-row { height: 38px; display: flex; align-items: center; white-space: nowrap; }
.obj-k { width: 79px; flex-shrink: 0; }
.obj-v { width: 241px; overflow: hidden; }
.lbl.grp { line-height: 15px; margin-top: 3px; }
.userbox {
  width: 320px;
  height: 108px;
  margin: 3px 0 0 1px;
  padding: 1px;
  box-sizing: border-box;
  border: 1px solid #6d6d6d;
  background: #fff;
}
.user-row {
  height: 17px;
  padding-left: 5px;
  display: flex;
  align-items: center;
  gap: 1px;
  white-space: nowrap;
}
.user-row.sel { background: #efefef; }
.user-ic { width: 16px; height: 16px; }
.btn-row {
  width: 320px;
  margin: 7px 0 0 1px;
  padding-right: 3px;
  box-sizing: border-box;
  display: flex;
  justify-content: flex-end;
  gap: 8px;
}
.btn {
  width: 73px;
  height: 21px;
  padding: 0;
  border: 1px solid #d2d2d2;
  border-radius: 4px;
  background: #fdfdfd;
  color: #222;
  font: inherit;
}
.perm-head {
  margin: 13px 0 0 1px;
  display: flex;
  line-height: 15px;
}
.ph-name { width: 209px; }
.ph-allow { width: 61px; }
.permbox {
  width: 320px;
  height: 99px;
  margin: 2px 0 0 1px;
  box-sizing: border-box;
  display: flex;
  border: 1px solid #6d6d6d;
  background: #fff;
  overflow: hidden;
}
.perm-rows { flex: 1; padding: 3px 0 0 11px; }
.perm-row { height: 18px; display: flex; align-items: center; }
.perm-name { width: 200px; flex-shrink: 0; }
.chk {
  position: relative;
  width: 12px;
  height: 12px;
  box-sizing: border-box;
  flex-shrink: 0;
  border: 1px solid #555;
  border-radius: 2px;
}
.chk.on { margin-right: 47px; border: none; background: #c0c0c0; }
.chk.focus { outline: 1px dotted #222; outline-offset: 1px; }
.scroll {
  width: 16px;
  flex-shrink: 0;
  background: #f6f6f6;
}
.thumb {
  width: 2px;
  height: 54px;
  margin: 17px 0 0 7px;
  background: #8a8a8a;
  border-radius: 1px;
}
.foot {
  padding: 9px 7px 0 0;
  display: flex;
  justify-content: flex-end;
  gap: 8px;
}
.foot .ok { border-color: #2b6a9a; }
.cursor {
  position: absolute;
  left: 300px;
  top: 386px;
}
</style>
